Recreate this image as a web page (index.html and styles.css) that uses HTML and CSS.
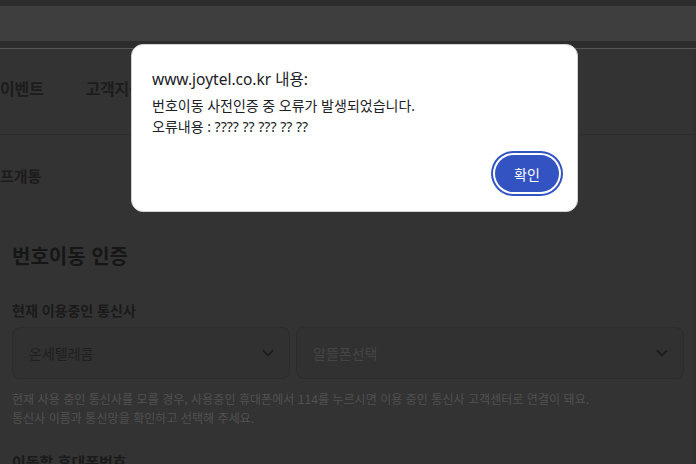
FILE: index.html
```html
<!DOCTYPE html>
<html lang="ko">
<head>
<meta charset="utf-8">
<title>번호이동 인증</title>
<link rel="stylesheet" href="styles.css">
</head>
<body>
<div class="topstrip"></div>
<div class="toolbar"></div>
<div class="tabline"></div>
<div class="page">
  <nav class="nav">
    <span class="nav-item">이벤트</span>
    <span class="nav-item">고객지원</span>
  </nav>
  <div class="sub">프개통</div>
  <main class="content">
    <h2 class="title">번호이동 인증</h2>
    <div class="label">현재 이용중인 통신사</div>
    <div class="selects">
      <div class="select select-first">
        <span class="select-value">온세텔레콤</span>
        <svg class="chev" width="12" height="8" viewBox="0 0 12 8"><path d="M1 1.5 L6 6.3 L11 1.5" fill="none" stroke="#1c1c1c" stroke-width="1.8"/></svg>
      </div>
      <div class="select select-second">
        <span class="select-placeholder">알뜰폰선택</span>
        <svg class="chev" width="12" height="8" viewBox="0 0 12 8"><path d="M1 1.5 L6 6.3 L11 1.5" fill="none" stroke="#1c1c1c" stroke-width="1.8"/></svg>
      </div>
    </div>
    <p class="helper">현재 사용 중인 통신사를 모를 경우, 사용중인 휴대폰에서 114를 누르시면 이용 중인 통신사 고객센터로 연결이 돼요.<br>통신사 이름과 통신망을 확인하고 선택해 주세요.</p>
    <div class="label label-2">이동할 휴대폰번호</div>
  </main>
  <div class="scrollbar"></div>
</div>
<div class="dialog">
  <div class="dialog-title">www.joytel.co.kr 내용:</div>
  <div class="dialog-body">번호이동 사전인증 중 오류가 발생되었습니다.<br>오류내용 : ???? ?? ??? ?? ??</div>
  <div class="dialog-actions">
    <button class="btn-ok">확인</button>
  </div>
</div>
</body>
</html>
```
FILE: styles.css
```css
html, body {
  margin: 0;
  padding: 0;
  width: 696px;
  height: 464px;
  overflow: hidden;
  background: #333333;
  font-family: "Noto Sans CJK KR", "Noto Sans", sans-serif;
}
.topstrip {
  height: 6px;
  background: #2c2c2c;
}
.toolbar {
  height: 35px;
  background: #3e3e3e;
}
.tabline {
  height: 7px;
  background: #2d2d2d;
  border-bottom: 1px solid #575757;
}
.page {
  position: relative;
  height: 415px;
  overflow: hidden;
}
.nav {
  box-sizing: border-box;
  height: 86px;
  padding-top: 28px;
  border-bottom: 1px solid #2d2d2d;
  display: flex;
  gap: 42px;
}
.nav-item {
  font-size: 16px;
  line-height: 22px;
  font-weight: 700;
  color: #1c1c1c;
  letter-spacing: -0.2px;
}
.sub {
  padding-top: 31px;
  height: 20px;
  line-height: 20px;
  font-size: 15px;
  font-weight: 700;
  color: #1c1c1c;
}
.content {
  padding: 0 12px;
}
.title {
  margin: 57px 0 0;
  font-size: 20px;
  line-height: 26px;
  font-weight: 700;
  color: #161616;
}
.label {
  margin-top: 32px;
  font-size: 14px;
  line-height: 18px;
  font-weight: 700;
  color: #1a1a1a;
}
.label-2 {
  margin-top: 26px;
  font-size: 15px;
}
.selects {
  margin-top: 8px;
  display: flex;
  gap: 6px;
}
.select {
  box-sizing: border-box;
  height: 52px;
  border: 1px solid #2c2c2c;
  border-radius: 8px;
  background: #313131;
  display: flex;
  align-items: center;
  justify-content: space-between;
  padding: 0 15px 0 16px;
}
.select-first {
  width: 278px;
}
.select-second {
  flex: 1;
}
.select-value {
  font-size: 14px;
  color: #1f1f1f;
}
.select-placeholder {
  font-size: 14px;
  color: #454545;
}
.chev {
  display: block;
}
.helper {
  margin: 10px 0 0;
  font-size: 12px;
  line-height: 19px;
  color: #515151;
  letter-spacing: 0.05px;
}
.scrollbar {
  position: absolute;
  right: 0;
  top: 0;
  width: 3px;
  height: 100%;
  background: #303030;
}
.dialog {
  position: absolute;
  left: 131px;
  top: 44px;
  width: 447px;
  height: 168px;
  box-sizing: border-box;
  background: #ffffff;
  border: 1px solid #d4d4d4;
  border-radius: 12px;
  padding: 24px 18px 0 20px;
  font-family: "Noto Sans", "Noto Sans CJK KR", sans-serif;
  color: #202124;
}
.dialog-title {
  font-size: 15.5px;
  line-height: 20px;
}
.dialog-body {
  margin-top: 6px;
  font-size: 14px;
  line-height: 21px;
}
.dialog-actions {
  display: flex;
  justify-content: flex-end;
  margin-top: 18px;
}
.btn-ok {
  width: 64px;
  height: 37px;
  border: none;
  border-radius: 19px;
  background: #3353c2;
  color: #ffffff;
  font-family: "Noto Sans CJK KR", sans-serif;
  font-size: 14px;
  box-shadow: 0 0 0 2px #ffffff, 0 0 0 4px #3353c2;
  padding: 0;
}
```
